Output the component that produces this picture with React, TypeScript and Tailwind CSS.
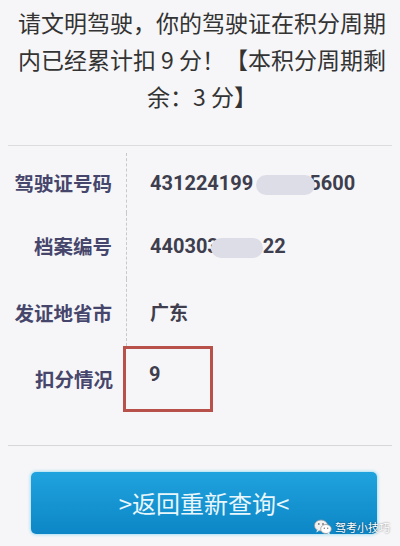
import React from 'react';

const CJK = { fontFamily: '"Noto Sans CJK SC", "Noto Sans", sans-serif' };
const NUM = { fontFamily: 'Roboto, "Noto Sans CJK SC", sans-serif' };

function Blur({ w, className = '' }: { w: number; className?: string }) {
  return (
    <span
      className={`relative z-10 inline-block h-[20px] rounded-full bg-[#dddde8] align-middle ${className}`}
      style={{ width: w }}
    />
  );
}

function WeChatIcon() {
  return (
    <svg width="18" height="16" viewBox="0 0 18 16">
      <ellipse cx="7" cy="6.5" rx="6.5" ry="5.5" fill="#f2f2f2" stroke="#9a9a9a" strokeWidth="0.8" />
      <path d="M3 11 L2.4 13.4 L5.4 11.6 Z" fill="#f2f2f2" />
      <ellipse cx="12" cy="10" rx="5.3" ry="4.5" fill="#ffffff" stroke="#9a9a9a" strokeWidth="0.8" />
      <path d="M15 13.6 L16 15.6 L13.2 14.2 Z" fill="#ffffff" />
      <circle cx="4.8" cy="5" r="0.9" fill="#777" />
      <circle cx="9" cy="5" r="0.9" fill="#777" />
      <circle cx="10.3" cy="9.3" r="0.7" fill="#777" />
      <circle cx="13.7" cy="9.3" r="0.7" fill="#777" />
    </svg>
  );
}

export default function App() {
  return (
    <div className="relative h-[546px] w-[400px] overflow-hidden bg-[#f6f6f8]" style={CJK}>
      {/* ── Notice ── */}
      <p className="pl-[4px] pt-[4px] text-center text-[23px] leading-[37px] text-[#333]">
        请文明驾驶，你的驾驶证在积分周期
        <br />
        内已经累计扣 9 分！【本积分周期剩
        <br />
        余：3 分】
      </p>

      <div className="mx-2 mt-[30px] border-t border-[#dcdcdc]" />

      {/* ── Info table ── */}
      <div className="pt-[7px]">
        <div className="flex h-[60px] items-center">
          <div className="flex h-full w-[127px] items-center justify-end border-r border-dashed border-[#c8c8c8] pr-[14px] text-[19.5px] font-bold text-[#46466c]">
            驾驶证号码
          </div>
          <div className="pl-[23px] text-[20px] font-bold text-[#3e3e4e]" style={NUM}>
            431224199
            <Blur w={59} className="-mr-[6px] ml-[3px]" />
            5600
          </div>
        </div>
        <div className="flex h-[66px] items-center">
          <div className="flex h-full w-[127px] items-center justify-end border-r border-dashed border-[#c8c8c8] pr-[14px] text-[19.5px] font-bold text-[#46466c]">
            档案编号
          </div>
          <div className="pl-[23px] text-[20px] font-bold text-[#3e3e4e]" style={NUM}>
            440303
            <Blur w={52} className="-ml-[8px]" />
            22
          </div>
        </div>
        <div className="flex h-[67px] items-center">
          <div className="flex h-full w-[127px] items-center justify-end border-r border-dashed border-[#c8c8c8] pr-[14px] text-[19.5px] font-bold text-[#46466c]">
            发证地省市
          </div>
          <div className="pl-[23px] text-[19px] font-bold text-[#3e3e4e]">广东</div>
        </div>
        <div className="flex h-[66px] items-center">
          <div className="flex h-full w-[123px] items-center justify-end pr-[10px] text-[19.5px] font-bold text-[#46466c]">
            扣分情况
          </div>
          <div className="h-full w-[90px] border-[3px] border-[#b9514b] pl-[23px] pt-[12px] text-[20px] font-bold leading-[26px] text-[#3e3e4e]" style={NUM}>
            9
          </div>
        </div>
      </div>

      <div className="mx-2 mt-[33px] border-t border-[#d6d6d6]" />

      {/* ── Button ── */}
      <button
        type="button"
        className="mx-[31px] mt-[26px] flex h-[62px] w-[346px] items-center justify-center rounded-[5px] bg-gradient-to-b from-[#1fa3de] to-[#0c86c6] text-[24px] text-[#e9f7fc] shadow-[0_0_3px_1px_rgba(120,210,240,0.6)]"
        style={CJK}
      >
        &gt;返回重新查询&lt;
      </button>

      {/* ── Watermark ── */}
      <div className="absolute left-[314px] top-[519px] flex items-center gap-[3px]">
        <WeChatIcon />
        <span className="text-[11px] text-white [text-shadow:0_0_2px_rgba(0,0,0,0.6)]">驾考小技巧</span>
      </div>
    </div>
  );
}
